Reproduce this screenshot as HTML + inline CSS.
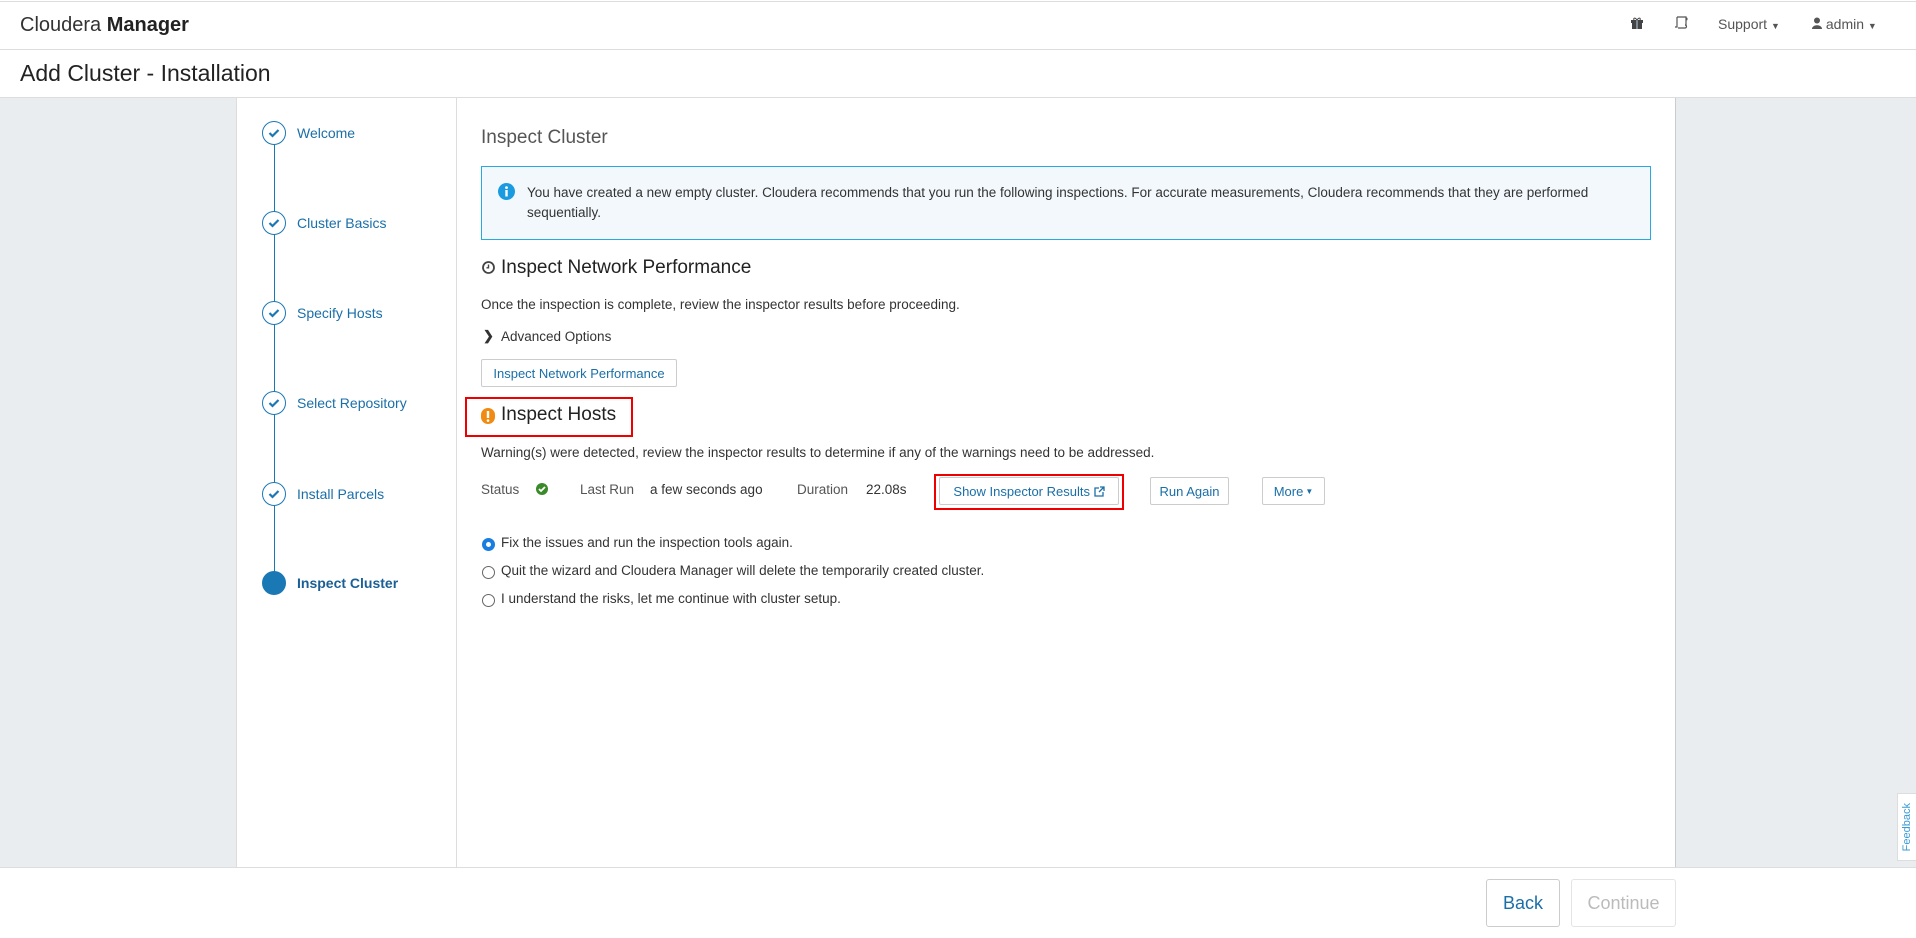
<!DOCTYPE html>
<html><head><meta charset="utf-8"><style>
*{box-sizing:border-box;margin:0;padding:0}
body{width:1916px;height:938px;position:relative;overflow:hidden;background:#fff;font-family:"Liberation Sans",sans-serif;color:#333;font-size:14px}
.a{position:absolute;white-space:nowrap}
.btn{position:absolute;border:1px solid #ccc;border-radius:2px;background:#fff;color:#1a6fa8;font-size:13px;display:flex;align-items:center;justify-content:center}
.step{position:absolute;left:262px;width:24px;height:24px;border:1.5px solid #1a78b4;border-radius:50%;background:#fff;display:flex;align-items:center;justify-content:center}
.sl{position:absolute;left:297px;color:#1a6fa8;font-size:14px}
.radio{position:absolute;left:482px;width:13px;height:13px;border:1px solid #666;border-radius:50%}
</style></head><body>
<div class="a" style="left:0;top:1px;width:1916px;height:1px;background:#ddd"></div>
<div class="a" style="left:20px;top:14px;font-size:20px;color:#333">Cloudera <span style="font-weight:bold;color:#222">Manager</span></div>
<svg class="a" style="left:1630px;top:16px" width="14" height="14" viewBox="0 0 14 14"><rect x="1" y="4" width="12" height="3" fill="#444"/><rect x="2" y="7" width="10" height="6" fill="#444"/><rect x="6.3" y="4" width="1.4" height="9" fill="#9ab"/><path d="M7 4C5 1 3 2 4 4M7 4C9 1 11 2 10 4" stroke="#444" fill="none"/></svg>
<svg class="a" style="left:1673px;top:15px" width="16" height="16" viewBox="0 0 16 16" fill="none" stroke="#555" stroke-width="1.2"><path d="M4 2h9v9M4 2v10H2M13 3a1 1 0 0 1 0 2M5 13h7a1.5 1.5 0 1 0 0-3"/></svg>
<div class="a" style="left:1718px;top:16px;font-size:14px;color:#555">Support <span style="font-size:9px">▼</span></div>
<div class="a" style="left:1812px;top:16px;font-size:14px;color:#555"><svg width="10" height="12" viewBox="0 0 10 12"><circle cx="5" cy="3.5" r="3" fill="#555"/><path d="M0 12c0-5 10-5 10 0z" fill="#555"/></svg> admin <span style="font-size:9px">▼</span></div>
<div class="a" style="left:0;top:49px;width:1916px;height:1px;background:#ddd"></div>
<div class="a" style="left:20px;top:60px;font-size:23px;color:#222">Add Cluster - Installation</div>
<div class="a" style="left:0;top:97px;width:1916px;height:1px;background:#ddd"></div>
<div class="a" style="left:0;top:98px;width:236px;height:769px;background:#e9edf0"></div>
<div class="a" style="left:1675px;top:98px;width:241px;height:769px;background:#e9edf0;border-left:1px solid #ccc"></div>
<div class="a" style="left:236px;top:98px;width:1px;height:769px;background:#ddd"></div>
<div class="a" style="left:456px;top:98px;width:1px;height:769px;background:#ddd"></div>
<div class="a" style="left:274px;top:134px;width:1px;height:450px;background:#1a78b4"></div>
<div class="step" style="top:121px"><svg width="12" height="10" viewBox="0 0 12 10"><path d="M1.5 5l3 3 6-6" stroke="#1a78b4" stroke-width="2.2" fill="none"/></svg></div><div class="sl" style="top:125px">Welcome</div>
<div class="step" style="top:211px"><svg width="12" height="10" viewBox="0 0 12 10"><path d="M1.5 5l3 3 6-6" stroke="#1a78b4" stroke-width="2.2" fill="none"/></svg></div><div class="sl" style="top:215px">Cluster Basics</div>
<div class="step" style="top:301px"><svg width="12" height="10" viewBox="0 0 12 10"><path d="M1.5 5l3 3 6-6" stroke="#1a78b4" stroke-width="2.2" fill="none"/></svg></div><div class="sl" style="top:305px">Specify Hosts</div>
<div class="step" style="top:391px"><svg width="12" height="10" viewBox="0 0 12 10"><path d="M1.5 5l3 3 6-6" stroke="#1a78b4" stroke-width="2.2" fill="none"/></svg></div><div class="sl" style="top:395px">Select Repository</div>
<div class="step" style="top:482px"><svg width="12" height="10" viewBox="0 0 12 10"><path d="M1.5 5l3 3 6-6" stroke="#1a78b4" stroke-width="2.2" fill="none"/></svg></div><div class="sl" style="top:486px">Install Parcels</div>
<div class="step" style="top:571px;background:#1a78b4"></div><div class="sl" style="top:575px;font-weight:bold;color:#1a5f95">Inspect Cluster</div>
<div class="a" style="left:481px;top:127px;font-size:19px;color:#555">Inspect Cluster</div>
<div class="a" style="left:481px;top:166px;width:1170px;height:74px;background:#f3f8fc;border:1px solid #29a9e0"></div>
<svg class="a" style="left:498px;top:183px" width="17" height="17" viewBox="0 0 17 17"><circle cx="8.5" cy="8.5" r="8.5" fill="#1a9be0"/><rect x="7.3" y="7" width="2.4" height="6.5" fill="#fff"/><circle cx="8.5" cy="4.6" r="1.4" fill="#fff"/></svg>
<div class="a" style="left:527px;top:183px;font-size:13.5px;color:#333;line-height:20px;white-space:normal;width:1110px">You have created a new empty cluster. Cloudera recommends that you run the following inspections. For accurate measurements, Cloudera recommends that they are performed sequentially.</div>
<svg class="a" style="left:482px;top:261px" width="13" height="13" viewBox="0 0 13 13"><circle cx="6.5" cy="6.5" r="5.5" stroke="#444" stroke-width="1.8" fill="none"/><path d="M6.5 3.5v3.3H4.5" stroke="#444" stroke-width="1.4" fill="none"/></svg>
<div class="a" style="left:501px;top:257px;font-size:19px;color:#222">Inspect Network Performance</div>
<div class="a" style="left:481px;top:297px;font-size:13.5px">Once the inspection is complete, review the inspector results before proceeding.</div>
<div class="a" style="left:483px;top:328px;font-size:13px;font-weight:bold">&#x276F;</div>
<div class="a" style="left:501px;top:329px;font-size:13.5px">Advanced Options</div>
<div class="btn" style="left:481px;top:359px;width:196px;height:28px">Inspect Network Performance</div>
<div class="a" style="left:465px;top:397px;width:168px;height:40px;border:2px solid #e00"></div>
<svg class="a" style="left:481px;top:408px" width="14" height="16" viewBox="0 0 14 16"><rect x="0" y="0" width="14" height="16" rx="7" fill="#f08a12"/><rect x="5.8" y="3" width="2.4" height="7" fill="#fff"/><circle cx="7" cy="12.6" r="1.3" fill="#fff"/></svg>
<div class="a" style="left:501px;top:404px;font-size:19px;color:#222">Inspect Hosts</div>
<div class="a" style="left:481px;top:445px;font-size:13.5px">Warning(s) were detected, review the inspector results to determine if any of the warnings need to be addressed.</div>
<div class="a" style="left:481px;top:482px;font-size:13.5px;color:#555">Status</div>
<svg class="a" style="left:536px;top:483px" width="12" height="12" viewBox="0 0 12 12"><circle cx="6" cy="6" r="6" fill="#3b8a2a"/><path d="M3 6l2 2 4-4" stroke="#fff" stroke-width="1.8" fill="none"/></svg>
<div class="a" style="left:580px;top:482px;font-size:13.5px;color:#555">Last Run</div>
<div class="a" style="left:650px;top:482px;font-size:13.5px;color:#333">a few seconds ago</div>
<div class="a" style="left:797px;top:482px;font-size:13.5px;color:#555">Duration</div>
<div class="a" style="left:866px;top:482px;font-size:13.5px;color:#333">22.08s</div>
<div class="a" style="left:934px;top:474px;width:190px;height:36px;border:2px solid #e00"></div>
<div class="btn" style="left:939px;top:477px;width:180px;height:28px">Show Inspector Results&nbsp;<svg width="11" height="11" viewBox="0 0 11 11" fill="none" stroke="#1a6fa8" stroke-width="1.3"><path d="M5 2H1v8h8V6M6 1h4v4M10 1L5 6"/></svg></div>
<div class="btn" style="left:1150px;top:477px;width:79px;height:28px">Run Again</div>
<div class="btn" style="left:1262px;top:477px;width:63px;height:28px">More <span style="font-size:8px;margin-left:2px">▼</span></div>
<div class="radio" style="top:538px;border:4px solid #1a7de0"></div><div class="a" style="left:501px;top:535px;font-size:13.5px">Fix the issues and run the inspection tools again.</div>
<div class="radio" style="top:566px"></div><div class="a" style="left:501px;top:563px;font-size:13.5px">Quit the wizard and Cloudera Manager will delete the temporarily created cluster.</div>
<div class="radio" style="top:594px"></div><div class="a" style="left:501px;top:591px;font-size:13.5px">I understand the risks, let me continue with cluster setup.</div>
<div class="a" style="left:1897px;top:793px;width:19px;height:68px;background:#fff;border:1px solid #ddd;border-right:none;display:flex;align-items:center;justify-content:center"><span style="writing-mode:vertical-rl;transform:rotate(180deg);font-size:11px;color:#3a9ad6">Feedback</span></div>
<div class="a" style="left:0;top:867px;width:1916px;height:1px;background:#ddd"></div>
<div class="btn" style="left:1486px;top:879px;width:74px;height:48px;font-size:18px;color:#1a6fa8;border-radius:3px">Back</div>
<div class="btn" style="left:1571px;top:879px;width:105px;height:48px;font-size:18px;color:#bbb;border-color:#e4e4e4;border-radius:3px">Continue</div>
</body></html>
